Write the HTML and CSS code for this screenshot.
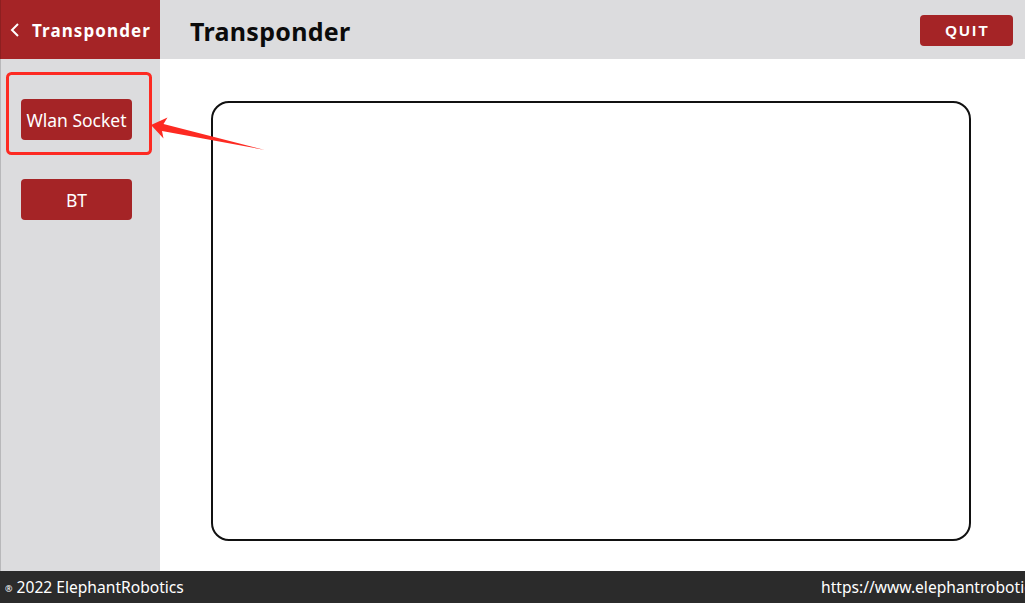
FILE: index.html
```html
<!DOCTYPE html>
<html>
<head>
<meta charset="utf-8">
<link rel="stylesheet" href="styles.css">
</head>
<body>
<div class="app">
  <div class="side-head">
    <svg class="chev" width="10" height="16" viewBox="0 0 10 16"><path d="M8 2 L2 8 L8 14" fill="none" stroke="#fff" stroke-width="2"/></svg>
    <span>Transponder</span>
  </div>
  <div class="topbar">
    <h1 class="title">Transponder</h1>
    <button class="quit">QUIT</button>
  </div>
  <div class="sidebar">
    <button class="nav-btn">Wlan Socket</button>
    <button class="nav-btn">BT</button>
  </div>
  <main class="main">
    <div class="panel"></div>
  </main>
  <footer class="footer">
    <div class="copy"><span class="reg">®</span> 2022 ElephantRobotics</div>
    <div class="url">https://www.elephantrobotics.com</div>
  </footer>
  <svg class="annot" width="1025" height="603" viewBox="0 0 1025 603">
    <rect x="7.5" y="73.5" width="143" height="80" rx="4" fill="none" stroke="#fd2a22" stroke-width="3"/>
    <polygon points="151,125 167.5,117.5 163.5,124 265,150 162,131 163.5,138.5" fill="#fd2a22"/>
  </svg>
</div>
</body>
</html>
```
FILE: styles.css
```css
* { box-sizing: border-box; }
html, body { margin: 0; padding: 0; }
body {
  width: 1025px;
  height: 603px;
  overflow: hidden;
  font-family: "Noto Sans", "Open Sans", sans-serif;
  background: #fff;
}
.app {
  position: relative;
  display: grid;
  grid-template-columns: 160px 1fr;
  grid-template-rows: 59px 1fr 32px;
  width: 1025px;
  height: 603px;
}
.side-head {
  background: #a52426;
  color: #fff;
  display: flex;
  align-items: center;
  padding-left: 9px;
  gap: 12px;
  border-left: 1px solid #8d1f20;
}
.side-head span {
  font-weight: 700;
  font-size: 17px;
  letter-spacing: 1.1px;
  margin-top: 1px;
}
.chev { display: block; }
.topbar {
  background: #dcdcde;
  display: flex;
  align-items: center;
  justify-content: space-between;
  padding: 0 12px 0 30px;
}
.title {
  margin: 0;
  font-size: 25px;
  font-weight: 700;
  color: #0b0b0b;
  letter-spacing: 0.3px;
  margin-top: 2px;
}
.quit {
  width: 93px;
  height: 31px;
  margin-top: 2px;
  border: none;
  border-radius: 4px;
  background: #a52426;
  color: #fff;
  font-family: "Liberation Sans", sans-serif;
  font-weight: 700;
  font-size: 15px;
  letter-spacing: 2.2px;
  padding: 0 0 0 2px;
}
.sidebar {
  background: #dcdcde;
  border-left: 1px solid #b8b8ba;
  display: flex;
  flex-direction: column;
  align-items: flex-start;
  padding: 40px 0 0 20px;
  gap: 39px;
}
.nav-btn {
  width: 111px;
  height: 41px;
  border: none;
  border-radius: 4px;
  background: #a52426;
  color: #fff;
  font-family: "Noto Sans", "Open Sans", sans-serif;
  font-size: 17.5px;
  padding: 0;
}
.main {
  background: #fff;
  padding: 42px 54px 30px 51px;
  display: flex;
}
.panel {
  flex: 1;
  border: 2px solid #111;
  border-radius: 18px;
}
.footer {
  grid-column: 1 / 3;
  background: #2b2b2b;
  color: #fff;
  display: grid;
  grid-template-columns: 1fr 204px;
  align-items: center;
  font-size: 15.6px;
  overflow: hidden;
}
.copy { padding-left: 5px; white-space: nowrap; }
.reg { font-size: 9px; vertical-align: 1px; }
.url { white-space: nowrap; overflow: hidden; }
.annot {
  position: absolute;
  left: 0;
  top: 0;
  pointer-events: none;
}
```
